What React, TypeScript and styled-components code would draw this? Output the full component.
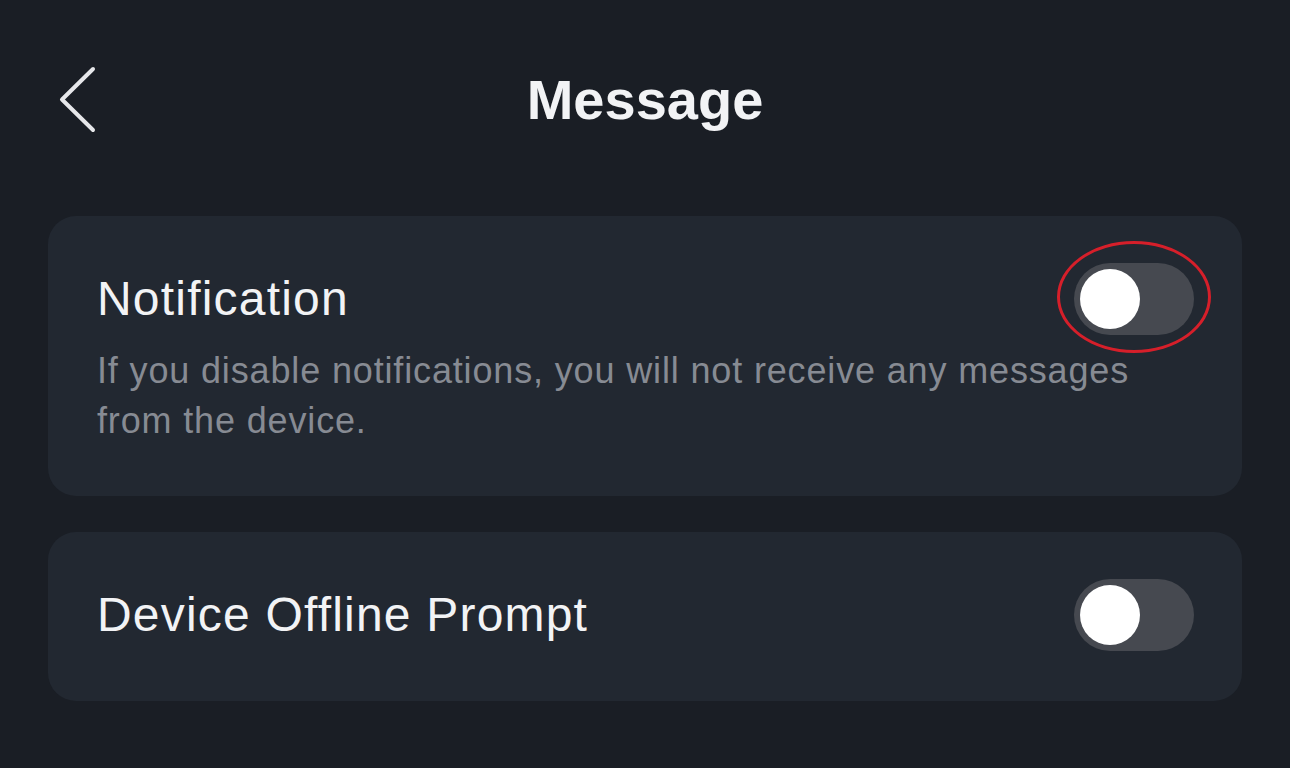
import React from 'react';
import styled, { createGlobalStyle } from 'styled-components';

const COLORS = {
  page: '#1a1e25',
  card: '#222831',
  text: '#f2f3f5',
  muted: '#878b93',
  track: '#464950',
  knob: '#ffffff',
  mark: '#d61f2a',
};

const GlobalStyle = createGlobalStyle`
  html, body {
    margin: 0;
    background-color: ${COLORS.page};
    font-family: 'Liberation Sans', Arial, sans-serif;
  }
`;

const Page = styled.div`
  width: 1290px;
  min-height: 768px;
  padding: 0 48px;
  box-sizing: border-box;
  background-color: ${COLORS.page};
`;

const Header = styled.header`
  display: grid;
  grid-template-columns: 1fr auto 1fr;
  align-items: center;
  height: 200px;
  margin-bottom: 16px;
`;

const BackButton = styled.button`
  justify-self: start;
  display: flex;
  padding: 0;
  margin-left: 10px;
  border: none;
  background: none;
  cursor: pointer;
`;

const Title = styled.h1`
  margin: 0;
  font-size: 56px;
  font-weight: 700;
  line-height: 64px;
  color: ${COLORS.text};
`;

const List = styled.div`
  display: flex;
  flex-direction: column;
  row-gap: 36px;
`;

const Card = styled.section`
  padding: 47px 48px 50px 49px;
  border-radius: 28px;
  background-color: ${COLORS.card};
`;

const Row = styled.div`
  display: flex;
  align-items: center;
  justify-content: space-between;
`;

const Label = styled.span`
  font-size: 48px;
  line-height: 60px;
  letter-spacing: 1.2px;
  color: ${COLORS.text};
`;

const Description = styled.p`
  margin: 11px 0 0;
  font-size: 36px;
  line-height: 50px;
  letter-spacing: 0.85px;
  color: ${COLORS.muted};
`;

const SwitchWrap = styled.div`
  position: relative;
  flex-shrink: 0;
`;

const Track = styled.button<{ $on: boolean }>`
  display: flex;
  align-items: center;
  justify-content: ${(p) => (p.$on ? 'flex-end' : 'flex-start')};
  width: 120px;
  height: 72px;
  padding: 0 6px;
  border: none;
  border-radius: 36px;
  background-color: ${(p) => (p.$on ? '#3f7cf6' : COLORS.track)};
  cursor: pointer;
`;

const Knob = styled.span`
  width: 60px;
  height: 60px;
  border-radius: 50%;
  background-color: ${COLORS.knob};
`;

const Highlight = styled.span`
  position: absolute;
  left: -17px;
  top: -22px;
  width: 154px;
  height: 112px;
  border: 3px solid ${COLORS.mark};
  border-radius: 50%;
  box-sizing: border-box;
  pointer-events: none;
`;

type SwitchProps = {
  on: boolean;
  marked?: boolean;
};

const Switch: React.FC<SwitchProps> = ({ on, marked }) => (
  <SwitchWrap>
    <Track $on={on} aria-pressed={on}>
      <Knob />
    </Track>
    {marked && <Highlight />}
  </SwitchWrap>
);

const ChevronLeft = () => (
  <svg width="40" height="68" viewBox="0 0 40 68" fill="none">
    <path
      d="M35 3 L4 33.5 L35 64"
      stroke="#e6e7ea"
      strokeWidth="4"
      strokeLinecap="round"
      strokeLinejoin="round"
    />
  </svg>
);

export default function App() {
  return (
    <>
      <GlobalStyle />
      <Page>
        <Header>
          <BackButton aria-label="Back">
            <ChevronLeft />
          </BackButton>
          <Title>Message</Title>
        </Header>

        <List>
          <Card>
            <Row>
              <Label>Notification</Label>
              <Switch on={false} marked />
            </Row>
            <Description>
              If you disable notifications, you will not receive any messages from the device.
            </Description>
          </Card>

          <Card>
            <Row>
              <Label>Device Offline Prompt</Label>
              <Switch on={false} />
            </Row>
          </Card>
        </List>
      </Page>
    </>
  );
}
